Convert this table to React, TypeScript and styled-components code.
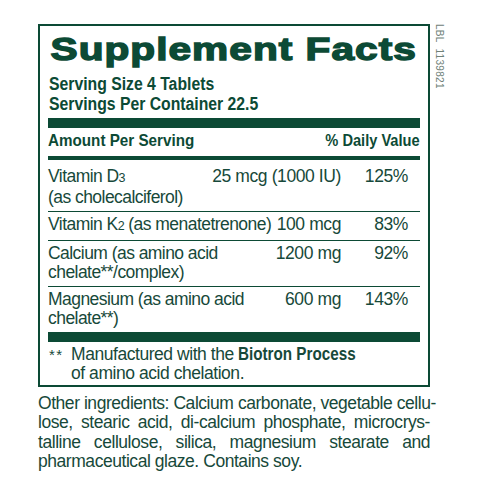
import React from "react";
import styled, { createGlobalStyle } from "styled-components";

const GREEN = "#0c4a35";
const TEXT = "#17493a";

const Global = createGlobalStyle`
  html, body { margin: 0; padding: 0; background: #ffffff; overflow: hidden; }
  body { font-family: "Liberation Sans", Arial, sans-serif; color: ${TEXT}; }
`;

const Page = styled.div`
  width: 480px;
  height: 480px;
  padding: 24px 0 0 38px;
  box-sizing: border-box;
  overflow: hidden;
`;

const TopRow = styled.div`
  display: flex;
  align-items: flex-start;
`;

const Panel = styled.section`
  width: 392px;
  box-sizing: border-box;
  border: 2px solid ${GREEN};
  padding: 5px 8px 2px 8px;
`;

const SideLabel = styled.div`
  writing-mode: vertical-rl;
  font-size: 10px;
  line-height: 10px;
  letter-spacing: 0.3px;
  color: #6f8178;
  margin-left: 4px;
  white-space: pre;
`;

const Title = styled.h1`
  display: inline-block;
  margin: 0;
  font-size: 32px;
  line-height: 36px;
  font-weight: 700;
  color: ${GREEN};
  white-space: nowrap;
  letter-spacing: 0.8px;
  -webkit-text-stroke: 1.4px ${GREEN};
  transform: scaleX(1.27);
  transform-origin: left center;
  padding-left: 2px;
`;

/* condensed bold text: Helvetica Condensed look via horizontal squeeze */
const Cond = styled.span<{ $sx: number; $right?: boolean }>`
  display: inline-block;
  white-space: nowrap;
  font-weight: 700;
  letter-spacing: 0;
  transform: scaleX(${(p) => p.$sx});
  transform-origin: ${(p) => (p.$right ? "right" : "left")} center;
`;

const Serving = styled.div`
  margin-top: 7px;
  font-size: 17.5px;
  line-height: 20px;
  color: ${GREEN};
  padding-left: 1px;
  display: flex;
  flex-direction: column;
  align-items: flex-start;
`;

const Bar = styled.div<{ $h: number; $mt?: number }>`
  height: ${(p) => p.$h}px;
  margin-top: ${(p) => p.$mt ?? 0}px;
  background: ${GREEN};
`;

const HeaderRow = styled.div`
  display: flex;
  justify-content: space-between;
  margin-top: 3px;
  margin-bottom: 5px;
  font-size: 17px;
  line-height: 20px;
  color: ${GREEN};
`;

const Rows = styled.div`
  margin-top: 4px;
`;

const Row = styled.div<{ $last?: boolean }>`
  display: flex;
  align-items: flex-start;
  padding: 3px 0 4px 0;
  border-bottom: ${(p) => (p.$last ? "none" : `1px solid ${GREEN}`)};
  font-size: 17.5px;
  line-height: 19px;
  letter-spacing: -0.4px;
  white-space: nowrap;
`;

const Name = styled.div`
  flex: 1;
  letter-spacing: -0.55px;
`;

const Amount = styled.div`
  text-align: right;
`;

const Pct = styled.div`
  width: 79px;
  box-sizing: border-box;
  padding-right: 12px;
  text-align: right;
`;

const Sub = styled.span`
  font-size: 12.5px;
`;

const Footnote = styled.div`
  display: grid;
  grid-template-columns: 23px 1fr;
  padding-top: 3px;
  font-size: 17.5px;
  line-height: 19px;
  letter-spacing: -0.45px;
  white-space: nowrap;
`;

const Stars = styled.span`
  font-size: 15px;
  letter-spacing: 1.5px;
  padding-left: 1px;
`;

const Ingredients = styled.div`
  width: 392px;
  margin-top: 7px;
  font-size: 17.5px;
  line-height: 19.3px;
  letter-spacing: -0.45px;
`;

const Line = styled.div<{ $last?: boolean }>`
  text-align: ${(p) => (p.$last ? "left" : "justify")};
  text-align-last: ${(p) => (p.$last ? "left" : "justify")};
  white-space: nowrap;
`;

const nutrients = [
  {
    name: (
      <>
        Vitamin D<Sub>3</Sub>
        <br />
        (as cholecalciferol)
      </>
    ),
    amount: "25 mcg (1000 IU)",
    pct: "125%",
  },
  {
    name: (
      <>
        Vitamin K<Sub>2</Sub> (as menatetrenone)
      </>
    ),
    amount: "100 mcg",
    pct: "83%",
  },
  {
    name: (
      <>
        Calcium (as amino acid
        <br />
        chelate**/complex)
      </>
    ),
    amount: "1200 mg",
    pct: "92%",
  },
  {
    name: (
      <>
        Magnesium (as amino acid
        <br />
        chelate**)
      </>
    ),
    amount: "600 mg",
    pct: "143%",
  },
];

const ingredientLines = [
  "Other ingredients: Calcium carbonate, vegetable cellu-",
  "lose, stearic acid, di-calcium phosphate, microcrys-",
  "talline cellulose, silica, magnesium stearate and",
  "pharmaceutical glaze. Contains soy.",
];

export default function App() {
  return (
    <>
      <Global />
      <Page>
        <TopRow>
          <Panel>
            <Title>Supplement Facts</Title>
            <Serving>
              <Cond $sx={0.9}>Serving Size 4 Tablets</Cond>
              <Cond $sx={0.9}>Servings Per Container 22.5</Cond>
            </Serving>
            <Bar $h={10} $mt={4} />
            <HeaderRow>
              <Cond $sx={0.895}>Amount Per Serving</Cond>
              <Cond $sx={0.86} $right>
                % Daily Value
              </Cond>
            </HeaderRow>
            <Bar $h={4} />
            <Rows>
              {nutrients.map((n, i) => (
                <Row key={i} $last={i === nutrients.length - 1}>
                  <Name>{n.name}</Name>
                  <Amount>{n.amount}</Amount>
                  <Pct>{n.pct}</Pct>
                </Row>
              ))}
            </Rows>
            <Bar $h={10} />
            <Footnote>
              <Stars>**</Stars>
              <div>
                Manufactured with the <Cond $sx={0.87}>Biotron Process</Cond>
                <br />
                of amino acid chelation.
              </div>
            </Footnote>
          </Panel>
          <SideLabel>{"LBL  1139821"}</SideLabel>
        </TopRow>
        <Ingredients>
          {ingredientLines.map((l, i) => (
            <Line key={i} $last={i === ingredientLines.length - 1}>
              {l}
            </Line>
          ))}
        </Ingredients>
      </Page>
    </>
  );
}
